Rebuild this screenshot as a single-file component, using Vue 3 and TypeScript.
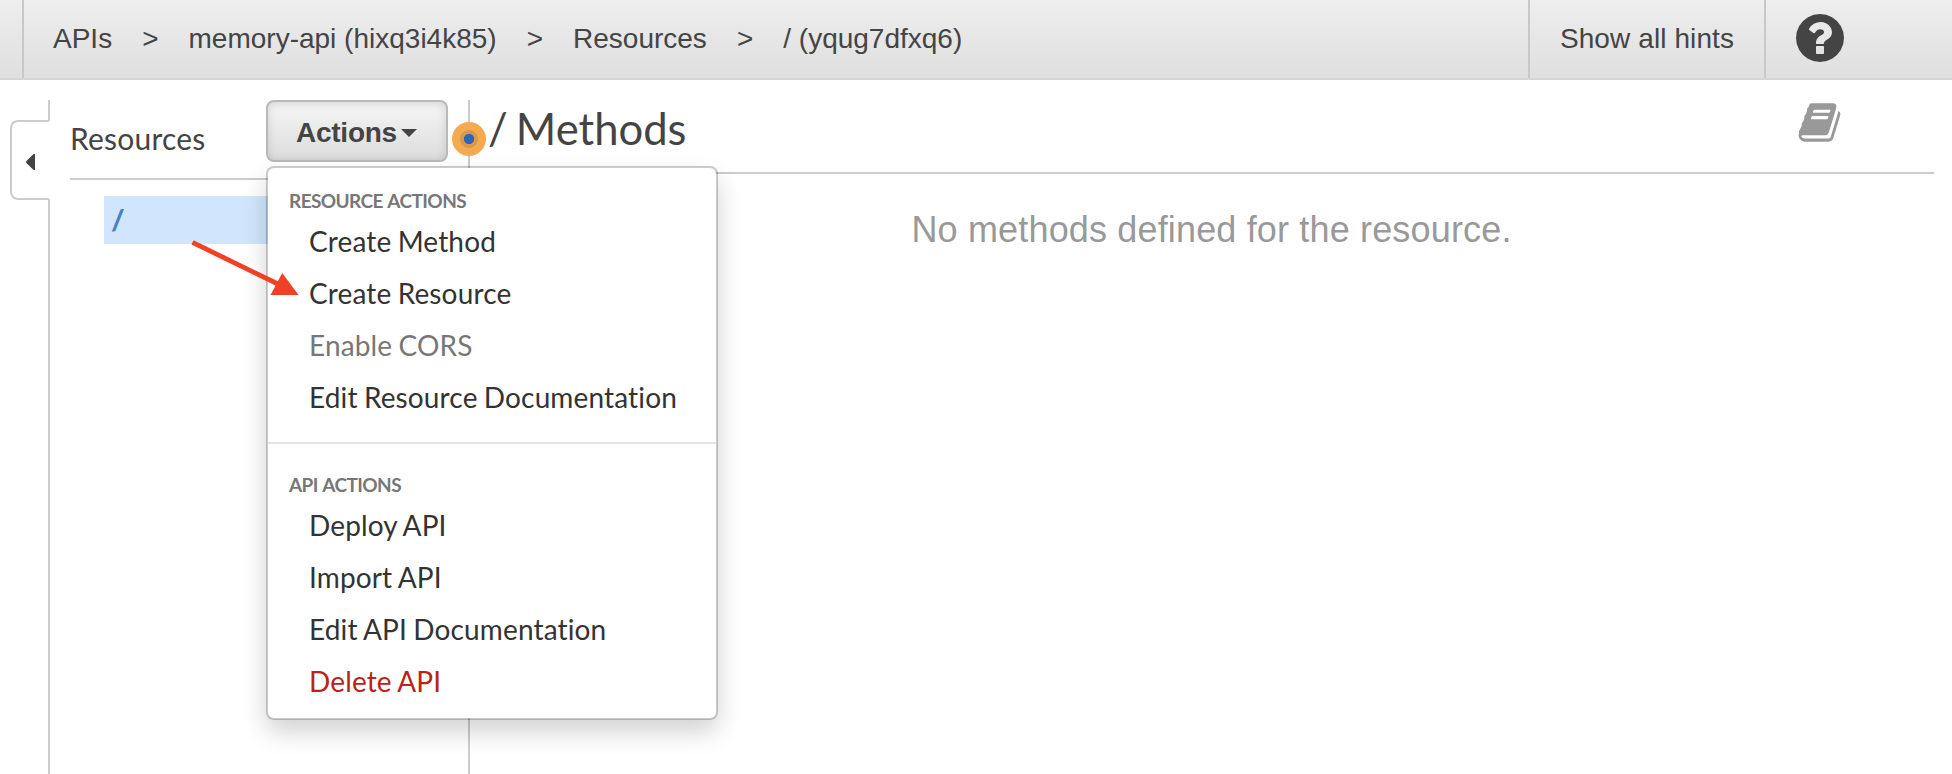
<script setup lang="ts">
interface MenuItem {
  label: string
  tone?: 'disabled' | 'danger'
}
interface MenuGroup {
  title: string
  items: MenuItem[]
}

const crumbs: string[] = ['APIs', 'memory-api (hixq3i4k85)', 'Resources', '/ (yqug7dfxq6)']

const groups: MenuGroup[] = [
  {
    title: 'RESOURCE ACTIONS',
    items: [
      { label: 'Create Method' },
      { label: 'Create Resource' },
      { label: 'Enable CORS', tone: 'disabled' },
      { label: 'Edit Resource Documentation' },
    ],
  },
  {
    title: 'API ACTIONS',
    items: [
      { label: 'Deploy API' },
      { label: 'Import API' },
      { label: 'Edit API Documentation' },
      { label: 'Delete API', tone: 'danger' },
    ],
  },
]
</script>

<template>
  <div class="page">
    <header class="topbar">
      <nav class="crumbs">
        <template v-for="(crumb, i) in crumbs" :key="crumb">
          <span v-if="i > 0" class="sep">&gt;</span>
          <a class="crumb">{{ crumb }}</a>
        </template>
      </nav>
      <a class="hints">Show all hints</a>
      <a class="help">
        <svg width="56" height="56" viewBox="0 0 1792 1792">
          <path
            fill="#444"
            d="M1024 1376v-192q0-14-9-23t-23-9h-192q-14 0-23 9t-9 23v192q0 14 9 23t23 9h192q14 0 23-9t9-23zm256-672q0-88-55.5-163t-138.5-116-170-41q-243 0-371 213-15 24 8 42l132 100q7 6 19 6 16 0 25-12 53-68 86-92 34-24 86-24 48 0 85.5 26t37.5 59q0 38-20 61t-68 45q-63 28-115.5 86.5t-52.5 125.5v36q0 14 9 23t23 9h192q14 0 23-9t9-23q0-19 21.5-49.5t54.5-49.5q32-18 49-28.5t46-35 44.5-48 28-60.5 12.5-81zm384 192q0 209-103 385.5t-279.5 279.5-385.5 103-385.5-103-279.5-279.5-103-385.5 103-385.5 279.5-279.5 385.5-103 385.5 103 279.5 279.5 103 385.5z"
          />
        </svg>
      </a>
    </header>

    <main class="body">
      <div class="rail">
        <div class="rail-top"></div>
        <div class="collapse">
          <svg width="10" height="16" viewBox="0 0 10 16">
            <path d="M9 0V16H7.6L0.6 9.2Q-0.4 8 0.6 6.8L7.6 0Z" fill="#444" />
          </svg>
        </div>
        <div class="rail-rest"></div>
      </div>

      <aside class="sidebar">
        <div class="sidebar-head">
          <h2 class="sidebar-title">Resources</h2>
          <div class="dropdown">
            <button class="actions">
              <span>Actions</span>
              <svg width="16" height="8" viewBox="0 0 16 8"><path d="M0 0H16L8 8Z" fill="#444" /></svg>
            </button>
            <div class="menu">
              <section v-for="group in groups" :key="group.title" class="group">
                <h3 class="group-title">{{ group.title }}</h3>
                <a v-for="item in group.items" :key="item.label" class="item" :class="item.tone">{{ item.label }}</a>
              </section>
            </div>
          </div>
        </div>
        <div class="node">/</div>
        <span class="hint"></span>
      </aside>

      <section class="content">
        <div class="content-head">
          <h1 class="content-title">/ Methods</h1>
          <svg class="book" width="45" height="45" viewBox="0 0 1792 1792">
            <path
              fill="#999"
              d="M1703 478q40 57 18 129l-275 906q-19 64-76.5 107.5t-122.5 43.5h-923q-77 0-148.5-53.5t-99.5-131.5q-24-67-2-127 0-4 3-27t4-37q1-8-3-21.5t-3-19.5q2-11 8-21t16.5-23.5 16.5-23.5q23-38 45-91.5t30-91.5q3-10 .5-30t-.5-28q3-11 17-28t17-23q21-36 42-92t25-90q1-9-2.5-32t.5-28q4-13 22-30.5t22-22.5q19-26 42.5-84.5t27.5-96.5q1-8-3-25.5t-2-26.5q2-8 9-18t18-23 17-21q8-12 16.5-30.5t15-35 16-36 19.5-32 26.5-23.5 36-11.5 47.5 5.5l-1 3q38-9 51-9h761q74 0 114 56t18 130l-274 906q-36 119-71.5 153.5t-128.5 34.5h-869q-27 0-38 15-11 16-1 43 24 70 144 70h923q29 0 56-15.5t35-41.5l300-987q7-22 5-57 38 15 59 43zm-1064 2q-4 13 2 22.5t20 9.5h608q13 0 25.5-9.5t16.5-22.5l21-64q4-13-2-22.5t-20-9.5h-608q-13 0-25.5 9.5t-16.5 22.5zm-83 256q-4 13 2 22.5t20 9.5h608q13 0 25.5-9.5t16.5-22.5l21-64q4-13-2-22.5t-20-9.5h-608q-13 0-25.5 9.5t-16.5 22.5z"
            />
          </svg>
        </div>
        <p class="empty">No methods defined for the resource.</p>
      </section>
    </main>

    <svg class="arrow" width="120" height="64" viewBox="0 0 120 64">
      <path d="M2.5 2.4L90 45" stroke="#ef4123" stroke-width="4.8" fill="none" />
      <path d="M92.2 33L108.6 55L80.6 55Z" fill="#ef4123" />
    </svg>
  </div>
</template>

<style>
html,
body {
  margin: 0;
  background: #fff;
}
</style>

<style scoped>
.page {
  position: relative;
  display: flex;
  flex-direction: column;
  width: 100%;
  height: 774px;
  overflow: hidden;
  color: #444;
  font-family: Lato, 'Open Sans', sans-serif;
  font-variant-ligatures: none;
}
.page * {
  box-sizing: border-box;
}
.topbar {
  display: flex;
  flex: none;
  height: 80px;
  border-bottom: 2px solid #d5d5d5;
  background: linear-gradient(#eee, #dfdfdf);
  font: 28px/78px 'Liberation Sans', Arial, sans-serif;
}
.crumbs {
  display: flex;
  flex: 1;
  margin-left: 22px;
  padding-left: 29px;
  border-left: 2px solid #c8c8c8;
  white-space: nowrap;
}
.sep {
  width: 76.4px;
  text-align: center;
}
.hints {
  width: 238px;
  border: solid #c8c8c8;
  border-width: 0 2px;
  letter-spacing: 0.1px;
  text-align: center;
}
.help {
  width: 186px;
  padding: 10px 0 0 26px;
}
.help svg {
  display: block;
}
.body {
  display: flex;
  flex: 1;
  padding-top: 20px;
}
.rail {
  display: flex;
  flex-direction: column;
  width: 50px;
}
.rail-top {
  height: 21px;
  border-right: 2px solid #ccc;
}
.collapse {
  display: flex;
  align-items: center;
  height: 80px;
  margin: -1px 1px -1px 10px;
  padding: 4px 0 0 14px;
  border: solid #ccc;
  border-width: 2px 0 2px 2px;
  border-radius: 8px 0 0 8px;
}
.rail-rest {
  flex: 1;
  border-right: 2px solid #ccc;
}
.sidebar {
  position: relative;
  width: 420px;
  padding-left: 20px;
  border-right: 2px solid #ccc;
}
.sidebar-head {
  display: flex;
  justify-content: space-between;
  height: 80px;
  padding-right: 20px;
  border-bottom: 2px solid #ccc;
}
.sidebar-title {
  margin: 0;
  font-size: 30px;
  font-weight: 400;
  letter-spacing: 0.2px;
  line-height: 76px;
}
.dropdown {
  position: relative;
}
.actions {
  display: flex;
  align-items: center;
  gap: 4px;
  width: 182px;
  height: 62px;
  padding: 3px 0 0 28px;
  border: 2px solid #b9b9b9;
  border-radius: 8px;
  background: linear-gradient(#f6f6f6, #dcdcdc);
  box-shadow: inset 0 2px 10px rgba(0, 0, 0, 0.13);
  color: #444;
  font: bold 28px/32px 'Liberation Sans', Arial, sans-serif;
  letter-spacing: -0.25px;
}
.menu {
  position: absolute;
  z-index: 2;
  top: 66px;
  left: 0;
  width: 452px;
  height: 554px;
  border: 2px solid rgba(0, 0, 0, 0.2);
  border-radius: 8px;
  background: #fff;
  background-clip: padding-box;
  box-shadow: 0 12px 24px rgba(0, 0, 0, 0.175);
}
.group {
  height: 274px;
  padding: 19px 20px 0 21px;
}
.group + .group {
  padding-top: 27px;
  border-top: 2px solid #e5e5e5;
}
.group-title {
  margin: 0;
  color: #777;
  font-size: 19px;
  font-weight: 700;
  letter-spacing: -0.58px;
  line-height: 28px;
  word-spacing: 1px;
}
.item {
  display: block;
  padding-left: 20px;
  color: #333;
  font-size: 28px;
  letter-spacing: 0.14px;
  line-height: 52px;
  white-space: nowrap;
  word-spacing: -1px;
}
.disabled {
  color: #777;
}
.danger {
  color: #ba2317;
}
.node {
  width: 364px;
  height: 48px;
  margin: 16px 0 0 34px;
  padding-left: 7px;
  background: #d1e6fc;
  color: #4a7fc5;
  font-size: 29px;
  font-weight: 900;
  line-height: 46px;
}
.hint {
  position: absolute;
  top: 22px;
  right: -18px;
  width: 34px;
  height: 34px;
  border-radius: 50%;
  background: radial-gradient(circle, #2d66b8 0 4.8px, #d79a4b 5.4px 8.7px, #f5aa51 9.3px);
}
.content {
  flex: 1;
  padding-right: 18px;
}
.content-head {
  display: flex;
  justify-content: space-between;
  height: 74px;
  padding: 0 92px 0 18px;
  border-bottom: 2px solid #ccc;
}
.content-title {
  margin: 0;
  font-size: 43.6px;
  font-weight: 400;
  line-height: 56px;
  word-spacing: -3px;
}
.empty {
  margin: 36px 0 0;
  padding-left: 19px;
  color: #999;
  font: 36px/40px 'Liberation Sans', Arial, sans-serif;
  letter-spacing: 0.16px;
  text-align: center;
}
.arrow {
  position: absolute;
  z-index: 3;
  top: 240px;
  left: 190px;
}
</style>
